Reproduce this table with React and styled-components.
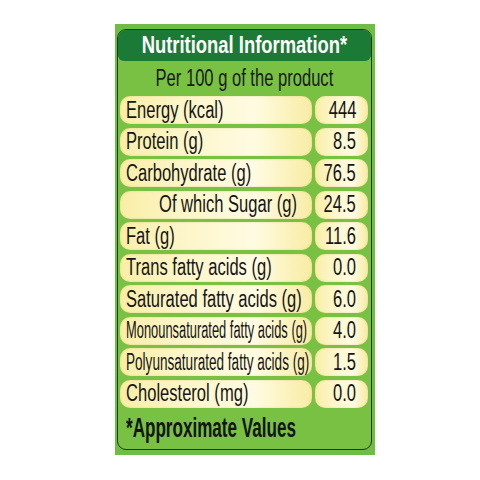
import React from "react";
import styled, { createGlobalStyle } from "styled-components";

const rows = [
  { label: "Energy (kcal)", value: "444" },
  { label: "Protein (g)", value: "8.5" },
  { label: "Carbohydrate (g)", value: "76.5" },
  { label: "Of which Sugar (g)", value: "24.5", indent: true },
  { label: "Fat (g)", value: "11.6" },
  { label: "Trans fatty acids (g)", value: "0.0" },
  { label: "Saturated fatty acids (g)", value: "6.0" },
  { label: "Monounsaturated fatty acids (g)", value: "4.0", squeeze: 0.56 },
  { label: "Polyunsaturated fatty acids (g)", value: "1.5", squeeze: 0.59 },
  { label: "Cholesterol (mg)", value: "0.0" },
];

export default function App() {
  return (
    <>
      <GlobalStyle />
      <Page>
        <Label>
          <Frame>
            <Header>
              <Squeeze $scale={0.8} $origin="center">
                Nutritional Information*
              </Squeeze>
            </Header>
            <Per>
              <Squeeze $scale={0.72} $origin="center">
                Per 100 g of the product
              </Squeeze>
            </Per>
            <Table>
              {rows.map((row) => (
                <Row key={row.label}>
                  <Pill $indent={row.indent}>
                    <Squeeze $scale={row.squeeze || 0.72}>{row.label}</Squeeze>
                  </Pill>
                  <Pill $value>
                    <Squeeze $scale={0.72} $origin="right">
                      {row.value}
                    </Squeeze>
                  </Pill>
                </Row>
              ))}
            </Table>
            <Footnote>
              <Squeeze $scale={0.61}>*Approximate Values</Squeeze>
            </Footnote>
          </Frame>
        </Label>
      </Page>
    </>
  );
}

const GlobalStyle = createGlobalStyle`
  body {
    margin: 0;
    background: #ffffff;
    font-family: "Liberation Sans", Arial, sans-serif;
  }
`;

const Page = styled.div`
  width: 480px;
  height: 480px;
  padding: 24px 0 0 115px;
  box-sizing: border-box;
`;

const Label = styled.div`
  width: 260px;
  height: 431px;
  box-sizing: border-box;
  padding: 5px 3px 5px 2px;
  background: #6fbe44;
`;

const Frame = styled.div`
  height: 100%;
  box-sizing: border-box;
  display: flex;
  flex-direction: column;
  border: 1.5px solid #1c3a1c;
  border-radius: 9px;
  background: #78c143;
  overflow: hidden;
`;

const Squeeze = styled.span`
  display: inline-block;
  white-space: nowrap;
  transform: scaleX(${(p) => p.$scale});
  transform-origin: ${(p) => p.$origin || "left"} center;
`;

const Header = styled.div`
  height: 31px;
  display: flex;
  align-items: center;
  justify-content: center;
  background: #1b7a35;
  border-radius: 7px 7px 6px 6px;
  color: #ffffff;
  font-size: 23px;
  font-weight: 700;
`;

const Per = styled.div`
  height: 35px;
  display: flex;
  align-items: center;
  justify-content: center;
  color: #1a1a1a;
  font-size: 23px;
`;

const Table = styled.div`
  display: flex;
  flex-direction: column;
  gap: 3.5px;
  padding: 0 1.5px 0 2px;
`;

const Row = styled.div`
  display: grid;
  grid-template-columns: 192px 53px;
  column-gap: 3px;
  height: 28px;
`;

const Pill = styled.div`
  display: flex;
  align-items: center;
  justify-content: ${(p) => (p.$value ? "flex-end" : "flex-start")};
  padding: ${(p) => (p.$value ? "0 12px 0 0" : p.$indent ? "0 0 0 39px" : "0 0 0 6px")};
  border-radius: 10px;
  background: linear-gradient(
    90deg,
    #f9eea6 0%,
    #fcf5c6 30%,
    #fffbe2 70%,
    #f8eca4 100%
  );
  box-shadow: inset 0 0 2px rgba(190, 170, 60, 0.45);
  color: #161616;
  font-size: 23px;
  overflow: visible;
`;

const Footnote = styled.div`
  flex: 1;
  display: flex;
  align-items: center;
  padding-left: 8px;
  color: #141414;
  font-size: 28px;
  font-weight: 700;
`;
